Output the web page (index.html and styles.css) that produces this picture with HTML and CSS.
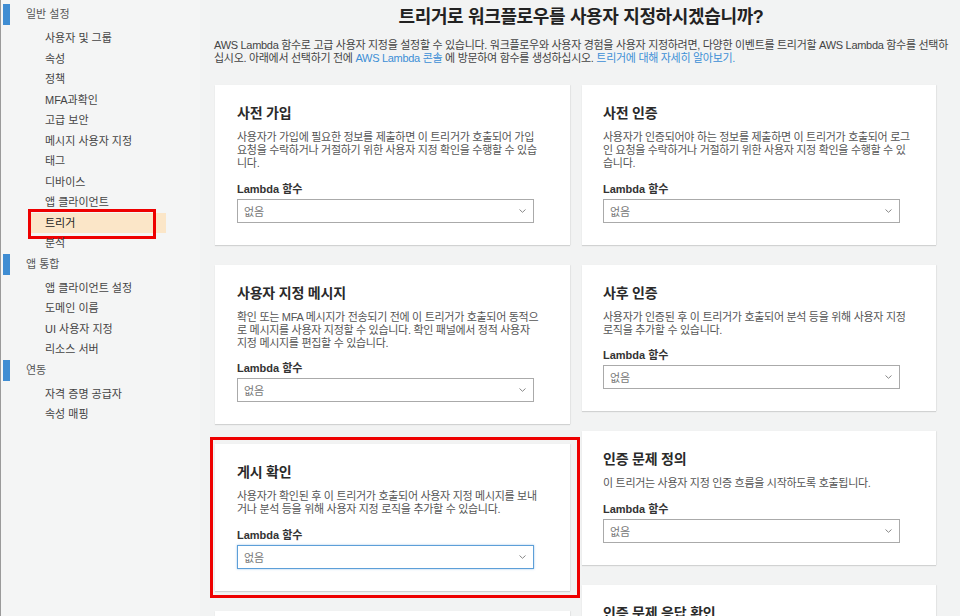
FILE: index.html
```html
<!DOCTYPE html>
<html lang="ko">
<head>
<meta charset="utf-8">
<title>트리거</title>
<link rel="stylesheet" href="styles.css">
</head>
<body>
<div class="page">
  <nav class="sidebar">
    <div class="section">
      <div class="sec-head">일반 설정</div>
      <ul class="items">
        <li>사용자 및 그룹</li>
        <li>속성</li>
        <li>정책</li>
        <li>MFA과확인</li>
        <li>고급 보안</li>
        <li>메시지 사용자 지정</li>
        <li>태그</li>
        <li>디바이스</li>
        <li>앱 클라이언트</li>
        <li class="active">트리거<span class="mark"></span></li>
        <li>분석</li>
      </ul>
    </div>
    <div class="section">
      <div class="sec-head">앱 통합</div>
      <ul class="items">
        <li>앱 클라이언트 설정</li>
        <li>도메인 이름</li>
        <li>UI 사용자 지정</li>
        <li>리소스 서버</li>
      </ul>
    </div>
    <div class="section">
      <div class="sec-head">연동</div>
      <ul class="items">
        <li>자격 증명 공급자</li>
        <li>속성 매핑</li>
      </ul>
    </div>
  </nav>

  <main class="main">
    <h1 class="title">트리거로 워크플로우를 사용자 지정하시겠습니까?</h1>
    <p class="intro">AWS Lambda 함수로 고급 사용자 지정을 설정할 수 있습니다. 워크플로우와 사용자 경험을 사용자 지정하려면, 다양한 이벤트를 트리거할 AWS Lambda 함수를 선택하십시오. 아래에서 선택하기 전에 <a class="link">AWS Lambda 콘솔</a> 에 방문하여 함수를 생성하십시오. <a class="link">트리거에 대해 자세히 알아보기.</a></p>

    <div class="cards">
      <div class="col col-left">
        <section class="card">
          <h3>사전 가입</h3>
          <p class="desc">사용자가 가입에 필요한 정보를 제출하면 이 트리거가 호출되어 가입 요청을 수락하거나 거절하기 위한 사용자 지정 확인을 수행할 수 있습니다.</p>
          <div class="field-label">Lambda 함수</div>
          <div class="select"><span>없음</span><svg class="chev" width="7" height="4" viewBox="0 0 7 4"><polyline points="0.5,0.5 3.5,3.3 6.5,0.5" fill="none" stroke="#888" stroke-width="1"/></svg></div>
        </section>
        <section class="card">
          <h3>사용자 지정 메시지</h3>
          <p class="desc">확인 또는 MFA 메시지가 전송되기 전에 이 트리거가 호출되어 동적으로 메시지를 사용자 지정할 수 있습니다. 확인 패널에서 정적 사용자 지정 메시지를 편집할 수 있습니다.</p>
          <div class="field-label">Lambda 함수</div>
          <div class="select"><span>없음</span><svg class="chev" width="7" height="4" viewBox="0 0 7 4"><polyline points="0.5,0.5 3.5,3.3 6.5,0.5" fill="none" stroke="#888" stroke-width="1"/></svg></div>
        </section>
        <section class="card card-marked">
          <h3>게시 확인</h3>
          <p class="desc">사용자가 확인된 후 이 트리거가 호출되어 사용자 지정 메시지를 보내거나 분석 등을 위해 사용자 지정 로직을 추가할 수 있습니다.</p>
          <div class="field-label">Lambda 함수</div>
          <div class="select focused"><span>없음</span><svg class="chev" width="7" height="4" viewBox="0 0 7 4"><polyline points="0.5,0.5 3.5,3.3 6.5,0.5" fill="none" stroke="#888" stroke-width="1"/></svg></div>
          <span class="card-mark"></span>
        </section>
        <section class="card">
          <h3>사전 토큰 생성</h3>
          <p class="desc">토큰이 생성되기 전에 이 트리거가 호출되어 토큰 클레임을 사용자 지정할 수 있습니다.</p>
          <div class="field-label">Lambda 함수</div>
          <div class="select"><span>없음</span><svg class="chev" width="7" height="4" viewBox="0 0 7 4"><polyline points="0.5,0.5 3.5,3.3 6.5,0.5" fill="none" stroke="#888" stroke-width="1"/></svg></div>
        </section>
      </div>
      <div class="col col-right">
        <section class="card">
          <h3>사전 인증</h3>
          <p class="desc">사용자가 인증되어야 하는 정보를 제출하면 이 트리거가 호출되어 로그인 요청을 수락하거나 거절하기 위한 사용자 지정 확인을 수행할 수 있습니다.</p>
          <div class="field-label">Lambda 함수</div>
          <div class="select"><span>없음</span><svg class="chev" width="7" height="4" viewBox="0 0 7 4"><polyline points="0.5,0.5 3.5,3.3 6.5,0.5" fill="none" stroke="#888" stroke-width="1"/></svg></div>
        </section>
        <section class="card">
          <h3>사후 인증</h3>
          <p class="desc">사용자가 인증된 후 이 트리거가 호출되어 분석 등을 위해 사용자 지정 로직을 추가할 수 있습니다.</p>
          <div class="field-label">Lambda 함수</div>
          <div class="select"><span>없음</span><svg class="chev" width="7" height="4" viewBox="0 0 7 4"><polyline points="0.5,0.5 3.5,3.3 6.5,0.5" fill="none" stroke="#888" stroke-width="1"/></svg></div>
        </section>
        <section class="card">
          <h3>인증 문제 정의</h3>
          <p class="desc">이 트리거는 사용자 지정 인증 흐름을 시작하도록 호출됩니다.</p>
          <div class="field-label">Lambda 함수</div>
          <div class="select"><span>없음</span><svg class="chev" width="7" height="4" viewBox="0 0 7 4"><polyline points="0.5,0.5 3.5,3.3 6.5,0.5" fill="none" stroke="#888" stroke-width="1"/></svg></div>
        </section>
        <section class="card">
          <h3>인증 문제 응답 확인</h3>
          <p class="desc">이 트리거는 사용자가 제공한 인증 문제 응답이 유효한지 확인하도록 호출됩니다.</p>
          <div class="field-label">Lambda 함수</div>
          <div class="select"><span>없음</span><svg class="chev" width="7" height="4" viewBox="0 0 7 4"><polyline points="0.5,0.5 3.5,3.3 6.5,0.5" fill="none" stroke="#888" stroke-width="1"/></svg></div>
        </section>
      </div>
    </div>
  </main>
</div>
</body>
</html>
```
FILE: styles.css
```css
* { box-sizing: border-box; }

html, body {
  margin: 0;
  padding: 0;
  height: 100%;
  overflow: hidden;
}

body {
  background: #f2f3f3;
  font-family: "Liberation Sans", "Noto Sans CJK KR", sans-serif;
  font-size: 11px;
  color: #444;
}

.page {
  display: flex;
  align-items: flex-start;
  min-height: 100%;
  border-left: 1px solid #9a9a9a;
}

/* ---------- sidebar ---------- */
.sidebar {
  width: 199px;
  flex: none;
  padding-top: 4px;
  background: #f4f5f5;
  min-height: 616px;
}

.sec-head {
  position: relative;
  height: 21px;
  line-height: 21px;
  padding-left: 25px;
  color: #555;
  font-size: 11px;
  margin-bottom: 3px;
}

.sec-head::before {
  content: "";
  position: absolute;
  left: 2px;
  top: 0;
  width: 7px;
  height: 21px;
  background: #3f8dd3;
}

.items {
  list-style: none;
  margin: 0;
  padding: 0;
}

.items li {
  position: relative;
  height: 20.5px;
  line-height: 20.5px;
  padding-left: 44px;
  color: #444;
}

.items li.active {
  margin-left: 27px;
  padding-left: 17px;
  width: 138px;
  background: #fbe6c8;
  color: #222;
}

.mark {
  position: absolute;
  left: 0;
  top: -4px;
  width: 128px;
  height: 30px;
  border: 3px solid #ee0000;
}

/* ---------- main ---------- */
.main {
  flex: 1;
  padding: 0 12px 0 14px;
}

.title {
  margin: 6px 0 0;
  font-size: 18px;
  line-height: 22px;
  font-weight: bold;
  color: #222;
  text-align: center;
  letter-spacing: -0.35px;
}

.intro {
  margin: 11px 0 0;
  font-size: 11px;
  line-height: 13px;
  color: #444;
  letter-spacing: -0.3px;
}

.link {
  color: #3d8fd6;
  text-decoration: none;
}

.cards {
  margin: 20px 0 0 1px;
  display: grid;
  grid-template-columns: 355px 354px;
  column-gap: 12px;
  align-items: start;
}

.col {
  display: flex;
  flex-direction: column;
  gap: 20px;
}

.card {
  position: relative;
  background: #fff;
  padding: 19px 31px 22px 22px;
  box-shadow: 0 1px 1px rgba(0, 0, 0, 0.13), 1px 0 1px rgba(0, 0, 0, 0.04);
}

.col-right .card {
  padding-left: 21px;
  padding-right: 25px;
}

.card h3 {
  margin: 0 0 9px;
  font-size: 14px;
  line-height: 18px;
  font-weight: 600;
  color: #2a2a2a;
  letter-spacing: -0.2px;
}

.desc {
  margin: 0 0 11.5px;
  font-size: 11px;
  line-height: 13px;
  color: #555;
  letter-spacing: -0.3px;
}

.field-label {
  font-weight: bold;
  font-size: 11px;
  line-height: 14px;
  color: #333;
  margin-bottom: 3px;
}

.select {
  width: 297px;
  height: 24px;
  border: 1px solid #aaa;
  background: #fff;
  display: flex;
  align-items: center;
  justify-content: space-between;
  padding: 0 7px 0 6px;
  color: #777;
  font-size: 11px;
}

.select.focused {
  border-color: #5d9fd8;
  box-shadow: 0 0 2px rgba(93, 159, 216, 0.6);
}

.chev {
  display: block;
}

.card-mark {
  position: absolute;
  left: -5px;
  top: -7px;
  width: 370px;
  height: 161px;
  border: 3px solid #ee0000;
}
```
